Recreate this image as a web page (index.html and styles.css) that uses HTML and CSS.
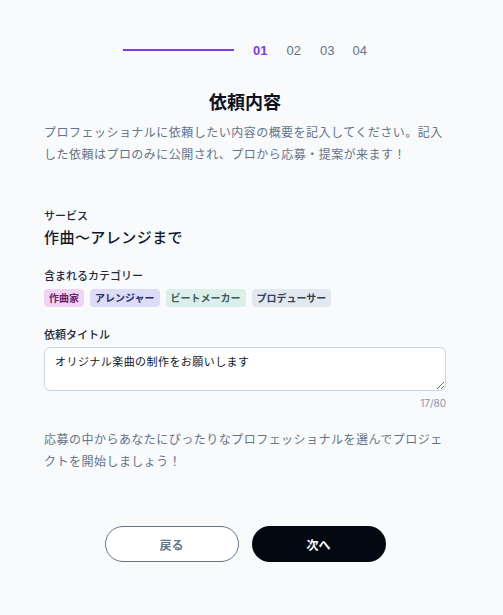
FILE: index.html
```html
<!DOCTYPE html>
<html lang="ja">
<head>
    <meta charset="UTF-8">
    <meta name="viewport" content="width=device-width, initial-scale=1.0">
    <title>依頼内容</title>
    <link rel="stylesheet" href="styles.css">
</head>
<body>
    <div class="page">
        <div class="steps">
            <span class="steps-line"></span>
            <span class="step active">01</span>
            <span class="step">02</span>
            <span class="step">03</span>
            <span class="step">04</span>
        </div>

        <h1>依頼内容</h1>
        <p class="note">プロフェッショナルに依頼したい内容の概要を記入してください。記入した依頼はプロのみに公開され、プロから応募・提案が来ます！</p>

        <div class="label service-label">サービス</div>
        <div class="service">作曲〜アレンジまで</div>

        <div class="label cat-label">含まれるカテゴリー</div>
        <div class="chips">
            <span class="chip chip-purple">作曲家</span>
            <span class="chip chip-indigo">アレンジャー</span>
            <span class="chip chip-teal">ビートメーカー</span>
            <span class="chip chip-slate">プロデューサー</span>
        </div>

        <label class="label title-label" for="title">依頼タイトル</label>
        <textarea id="title" class="title-input">オリジナル楽曲の制作をお願いします</textarea>
        <div class="counter">17/80</div>

        <p class="note note-bottom">応募の中からあなたにぴったりなプロフェッショナルを選んでプロジェクトを開始しましょう！</p>

        <div class="actions">
            <button class="btn btn-back">戻る</button>
            <button class="btn btn-next">次へ</button>
        </div>
    </div>
</body>
</html>
```

FILE: styles.css
```css
body {
    margin: 0;
    background-color: #f8fafc;
    font-family: 'Inter', 'Noto Sans CJK JP', sans-serif;
    color: #0f172a;
}
.page {
    width: 402px;
    margin-left: 44px;
    padding-bottom: 40px;
}

/* ステップ表示 */
.steps {
    display: flex;
    justify-content: center;
    align-items: center;
    gap: 19px;
    margin-top: 41px;
    height: 18px;
    font-family: 'Liberation Sans', sans-serif;
    font-size: 13px;
    color: #64748b;
}
.steps-line {
    width: 111px;
    height: 2px;
    background-color: #7c3aed;
}
.step:last-child {
    margin-left: -1px;
}
.step.active {
    color: #7c3aed;
    font-weight: 700;
}

h1 {
    margin: 31px 0 0;
    font-size: 18px;
    line-height: 26px;
    text-align: center;
    font-weight: 700;
    color: #0b1220;
}
.note {
    margin: 6px 0 0;
    font-size: 12px;
    letter-spacing: 0.04em;
    line-height: 22px;
    color: #64748b;
}
.note-bottom {
    margin-top: 19px;
}

.label {
    display: block;
    font-size: 11px;
    line-height: 16px;
    font-weight: 500;
    color: #1e293b;
}
.service-label {
    margin-top: 42px;
}
.service {
    margin-top: 3px;
    font-size: 15px;
    line-height: 22px;
    font-weight: 500;
    letter-spacing: 0.03em;
    color: #0f172a;
}
.cat-label {
    margin-top: 19px;
}
.chips {
    display: flex;
    gap: 6px;
    margin-top: 5px;
}
.chip {
    height: 18px;
    line-height: 18px;
    padding: 0 5px;
    border-radius: 4px;
    font-size: 10px;
    font-weight: 700;
}
.chip-purple { background-color: #f1d4f4; color: #6b2169; }
.chip-indigo { background-color: #dcdcf6; color: #2f2d6b; }
.chip-teal { background-color: #dcefea; color: #3d5d57; }
.chip-slate { background-color: #e2e8f0; color: #334155; }

.title-label {
    margin-top: 20px;
}
.title-input {
    display: block;
    width: 100%;
    height: 44px;
    margin-top: 4px;
    padding: 6px 10px;
    box-sizing: border-box;
    border: 1px solid #cbd5e1;
    border-radius: 6px;
    background-color: #fff;
    font-family: inherit;
    font-size: 11px;
    line-height: 16px;
    letter-spacing: 0.04em;
    color: #0f172a;
}
.counter {
    margin-top: 5px;
    font-size: 10px;
    line-height: 14px;
    text-align: right;
    color: #8a94a6;
}

.actions {
    display: flex;
    justify-content: center;
    gap: 13px;
    margin-top: 53px;
}
.btn {
    width: 134px;
    height: 36px;
    border-radius: 18px;
    font-family: inherit;
    font-size: 12px;
    font-weight: 700;
    cursor: pointer;
}
.btn-back {
    background-color: #fff;
    border: 1px solid #64748b;
    color: #64748b;
}
.btn-next {
    background-color: #030712;
    border: none;
    color: #fff;
}
```
